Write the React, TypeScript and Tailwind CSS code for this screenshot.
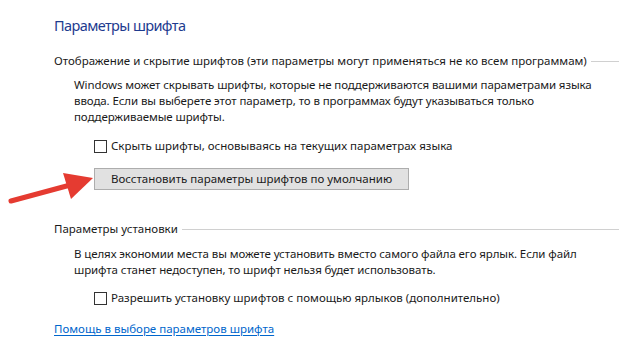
import React from 'react';

const font = { fontFamily: '"Noto Sans", "Open Sans", sans-serif' };

const Checkbox: React.FC<{ label: string }> = ({ label }) => (
  <label className="flex items-center gap-[4px] ml-[40px] h-[16px] whitespace-nowrap">
    <span className="w-[13px] h-[13px] border border-[#333333] bg-white shrink-0" />
    <span>{label}</span>
  </label>
);

const GroupHeader: React.FC<{ title: string }> = ({ title }) => (
  <div className="flex items-center h-[16px] whitespace-nowrap">
    <span>{title}</span>
    <div className="flex-1 ml-[4px] border-t border-[#d0d0d0]" />
  </div>
);

const App: React.FC = () => {
  return (
    <div
      className="relative w-[638px] h-[360px] bg-white text-[11.5px] leading-[16px] text-[#1a1a1a] pl-[54px] pr-[19px] pt-[15px] overflow-hidden"
      style={font}
    >
      <h1 className="text-[14.5px] leading-[20px] tracking-[-0.6px] text-[#1e3b8f] font-normal">Параметры шрифта</h1>

      <div className="mt-[18px]">
        <GroupHeader title="Отображение и скрытие шрифтов (эти параметры могут применяться не ко всем программам)" />
        <p className="ml-[20px] mt-[8px] whitespace-nowrap tracking-[-0.1px]">
          Windows может скрывать шрифты, которые не поддерживаются вашими параметрами языка
          <br />
          ввода. Если вы выберете этот параметр, то в программах будут указываться только
          <br />
          поддерживаемые шрифты.
        </p>
        <div className="mt-[13px]">
          <Checkbox label="Скрыть шрифты, основываясь на текущих параметрах языка" />
        </div>
        <button className="ml-[40px] mt-[14px] w-[315px] h-[22px] bg-[#e1e1e1] border border-[#adadad] text-[#1a1a1a] flex items-center justify-center whitespace-nowrap">
          Восстановить параметры шрифтов по умолчанию
        </button>
      </div>

      <div className="mt-[31px]">
        <GroupHeader title="Параметры установки" />
        <p className="ml-[20px] mt-[9px] whitespace-nowrap tracking-[-0.1px]">
          В целях экономии места вы можете установить вместо самого файла его ярлык. Если файл
          <br />
          шрифта станет недоступен, то шрифт нельзя будет использовать.
        </p>
        <div className="mt-[12px]">
          <Checkbox label="Разрешить установку шрифтов с помощью ярлыков (дополнительно)" />
        </div>
      </div>

      <a href="#" className="block mt-[15px] text-[#0066cc] underline underline-offset-2 w-fit whitespace-nowrap">
        Помощь в выборе параметров шрифта
      </a>

      {/* red annotation arrow */}
      <svg className="absolute left-0 top-[168px]" width="100" height="40" viewBox="0 168 100 40">
        <line x1="11" y1="201" x2="74" y2="184" stroke="#e53b31" strokeWidth="5" strokeLinecap="round" />
        <polygon points="93,178 63,173 71,199" fill="#e53b31" />
      </svg>
    </div>
  );
};

export default App;
